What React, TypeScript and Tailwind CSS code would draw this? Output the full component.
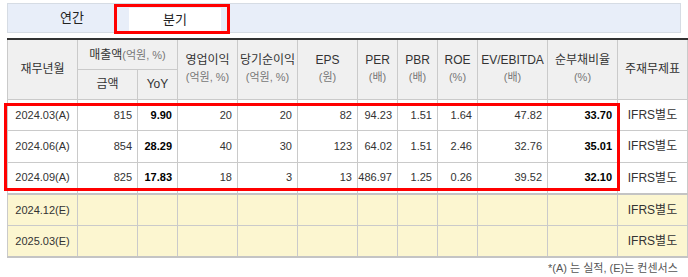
const font = "font-['Liberation_Sans','Noto_Sans_CJK_KR',sans-serif]";

type Row = {
  period: string;
  values: string[];
};

const actuals: Row[] = [
  { period: "2024.03(A)", values: ["815", "9.90", "20", "20", "82", "94.23", "1.51", "1.64", "47.82", "33.70"] },
  { period: "2024.06(A)", values: ["854", "28.29", "40", "30", "123", "64.02", "1.51", "2.46", "32.76", "35.01"] },
  { period: "2024.09(A)", values: ["825", "17.83", "18", "3", "13", "486.97", "1.25", "0.26", "39.52", "32.10"] },
];

const estimates = ["2024.12(E)", "2025.03(E)"];

// columns that are shown in bold (YoY, 순부채비율)
const boldCols = [1, 9];

const colWidths = [70, 60, 40, 60, 60, 60, 40, 40, 40, 70, 70, 70];

function HeadCell({
  title,
  unit,
  rowSpan,
  colSpan,
}: {
  title: string;
  unit?: string;
  rowSpan?: number;
  colSpan?: number;
}) {
  return (
    <th
      rowSpan={rowSpan}
      colSpan={colSpan}
      className="border border-[#cacaca] bg-[#f0f0f0] px-0 text-center align-middle font-normal leading-[17px] text-[#333]"
    >
      <div className="text-[12px]">{title}</div>
      {unit && <div className="text-[11px] text-[#777]">{unit}</div>}
    </th>
  );
}

export default function App() {
  return (
    <div className={`relative h-[277px] w-[688px] overflow-hidden bg-white ${font}`}>
      <div className="px-[7px] pt-[3px]">
        {/* tabs */}
        <div className="flex h-[30px] items-end border border-[#d6dce4] bg-[#e8eef9] text-[13px] text-[#222]">
          <div className="ml-[14px] flex h-full w-[100px] items-center justify-center">연간</div>
          <div className="ml-[7px] flex h-[24px] w-[92px] items-center justify-center bg-white">분기</div>
        </div>

        {/* table */}
        <table className="mt-[5px] w-[680px] table-fixed border-collapse border-t-2 border-t-[#333]">
          <colgroup>
            {colWidths.map((w, i) => (
              <col key={i} style={{ width: w }} />
            ))}
          </colgroup>
          <thead>
            <tr className="h-[30px]">
              <HeadCell title="재무년월" rowSpan={2} />
              <th
                colSpan={2}
                className="border border-[#cacaca] bg-[#f0f0f0] text-center align-middle font-normal text-[#333]"
              >
                <span className="text-[12px]">매출액</span>
                <span className="text-[11px] text-[#777]">(억원, %)</span>
              </th>
              <HeadCell title="영업이익" unit="(억원, %)" rowSpan={2} />
              <HeadCell title="당기순이익" unit="(억원, %)" rowSpan={2} />
              <HeadCell title="EPS" unit="(원)" rowSpan={2} />
              <HeadCell title="PER" unit="(배)" rowSpan={2} />
              <HeadCell title="PBR" unit="(배)" rowSpan={2} />
              <HeadCell title="ROE" unit="(%)" rowSpan={2} />
              <HeadCell title="EV/EBITDA" unit="(배)" rowSpan={2} />
              <HeadCell title="순부채비율" unit="(%)" rowSpan={2} />
              <HeadCell title="주재무제표" rowSpan={2} />
            </tr>
            <tr className="h-[30px]">
              <HeadCell title="금액" />
              <HeadCell title="YoY" />
            </tr>
          </thead>
          <tbody className="text-[11px] text-[#333]">
            {actuals.map((r, ri) => (
              <tr
                key={r.period}
                className={`h-[31.6px] ${ri === actuals.length - 1 ? "border-b-2 border-b-[#c4c4c4]" : ""}`}
              >
                <td className="border border-[#cacaca] text-center">{r.period}</td>
                {r.values.map((v, i) => (
                  <td
                    key={i}
                    className={`border border-[#cacaca] pr-[5px] text-right ${
                      boldCols.includes(i) ? "font-bold text-black" : ""
                    }`}
                  >
                    {v}
                  </td>
                ))}
                <td className="border border-[#cacaca] text-center text-[12px]">IFRS별도</td>
              </tr>
            ))}
            {estimates.map((p, ri) => (
              <tr
                key={p}
                className={`h-[31.6px] bg-[#fcf6d0] ${ri === estimates.length - 1 ? "border-b-2 border-b-[#c4c4c4]" : ""}`}
              >
                <td className="border border-[#cacaca] text-center">{p}</td>
                {Array.from({ length: 10 }).map((_, i) => (
                  <td key={i} className="border border-[#cacaca]" />
                ))}
                <td className="border border-[#cacaca] text-center text-[12px]">IFRS별도</td>
              </tr>
            ))}
          </tbody>
        </table>

        <div className="mt-[3px] whitespace-nowrap pl-[541px] text-[11px] leading-[14px] text-[#555]">
          *(A) 는 실적, (E)는 컨센서스
        </div>
      </div>

      {/* highlight boxes */}
      <div className="absolute left-[114px] top-[4px] h-[30px] w-[116px] border-[3px] border-[#f00]" />
      <div className="absolute left-[4px] top-[103px] h-[88px] w-[616px] border-[3px] border-[#f00]" />
    </div>
  );
}
